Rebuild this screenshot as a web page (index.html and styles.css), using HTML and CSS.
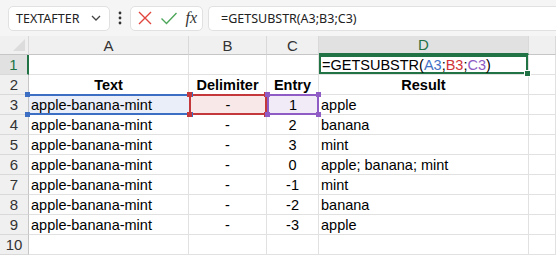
FILE: index.html
```html
<!DOCTYPE html>
<html lang="en">
<head>
    <meta charset="UTF-8">
    <title>GETSUBSTR</title>
    <link rel="stylesheet" href="styles.css">
</head>
<body>

    <div class="toolbar">
        <div class="namebox">
            <span>TEXTAFTER</span>
            <svg width="12" height="8" viewBox="0 0 12 8"><path d="M2 2 L6 6 L10 2" fill="none" stroke="#444" stroke-width="1.3"/></svg>
        </div>
        <div class="dots">
            <svg width="4" height="14" viewBox="0 0 4 14"><circle cx="2" cy="2" r="1.4" fill="#333"/><circle cx="2" cy="7" r="1.4" fill="#333"/><circle cx="2" cy="12" r="1.4" fill="#333"/></svg>
        </div>
        <div class="actions">
            <svg width="16" height="16" viewBox="0 0 16 16"><path d="M2 2 L14 14 M14 2 L2 14" stroke="#e0443c" stroke-width="1.4"/></svg>
            <svg width="18" height="16" viewBox="0 0 18 16"><path d="M1.5 8.5 L6.5 13.5 L16.5 3" fill="none" stroke="#4ca65a" stroke-width="1.4"/></svg>
            <span class="fx">fx</span>
        </div>
        <div class="formula">=GETSUBSTR(A3;B3;C3)</div>
    </div>

    <div class="sheet">
        <div class="corner"></div>
        <div class="colhead">A</div>
        <div class="colhead">B</div>
        <div class="colhead">C</div>
        <div class="colhead active">D</div>
        <div class="colhead"></div>

        <div class="rowhead active">1</div>
        <div class="cell"></div>
        <div class="cell"></div>
        <div class="cell"></div>
        <div class="cell current">=GETSUBSTR(<span class="ref-a">A3</span>;<span class="ref-b">B3</span>;<span class="ref-c">C3</span>)<i class="handle"></i></div>
        <div class="cell"></div>

        <div class="rowhead">2</div>
        <div class="cell bold center">Text</div>
        <div class="cell bold center">Delimiter</div>
        <div class="cell bold center">Entry</div>
        <div class="cell bold center">Result</div>
        <div class="cell"></div>

        <div class="rowhead">3</div>
        <div class="cell sel sel-a">apple-banana-mint<i class="dot tl"></i><i class="dot tr"></i><i class="dot bl"></i><i class="dot br"></i></div>
        <div class="cell center sel sel-b">-<i class="dot tl"></i><i class="dot tr"></i><i class="dot bl"></i><i class="dot br"></i></div>
        <div class="cell center sel sel-c">1<i class="dot tl"></i><i class="dot tr"></i><i class="dot bl"></i><i class="dot br"></i></div>
        <div class="cell">apple</div>
        <div class="cell"></div>

        <div class="rowhead">4</div>
        <div class="cell">apple-banana-mint</div>
        <div class="cell center">-</div>
        <div class="cell center">2</div>
        <div class="cell">banana</div>
        <div class="cell"></div>

        <div class="rowhead">5</div>
        <div class="cell">apple-banana-mint</div>
        <div class="cell center">-</div>
        <div class="cell center">3</div>
        <div class="cell">mint</div>
        <div class="cell"></div>

        <div class="rowhead">6</div>
        <div class="cell">apple-banana-mint</div>
        <div class="cell center">-</div>
        <div class="cell center">0</div>
        <div class="cell">apple; banana; mint</div>
        <div class="cell"></div>

        <div class="rowhead">7</div>
        <div class="cell">apple-banana-mint</div>
        <div class="cell center">-</div>
        <div class="cell center">-1</div>
        <div class="cell">mint</div>
        <div class="cell"></div>

        <div class="rowhead">8</div>
        <div class="cell">apple-banana-mint</div>
        <div class="cell center">-</div>
        <div class="cell center">-2</div>
        <div class="cell">banana</div>
        <div class="cell"></div>

        <div class="rowhead">9</div>
        <div class="cell">apple-banana-mint</div>
        <div class="cell center">-</div>
        <div class="cell center">-3</div>
        <div class="cell">apple</div>
        <div class="cell"></div>

        <div class="rowhead">10</div>
        <div class="cell"></div>
        <div class="cell"></div>
        <div class="cell"></div>
        <div class="cell"></div>
        <div class="cell"></div>
    </div>

</body>
</html>
```

FILE: styles.css
```css
body {
    margin: 0;
    width: 556px;
    height: 267px;
    overflow: hidden;
    background-color: #ffffff;
    font-family: "Liberation Sans", Arial, sans-serif;
}
.toolbar {
    height: 36px;
    background-color: #f5f5f5;
    display: flex;
    align-items: center;
    padding-left: 8px;
    box-sizing: border-box;
}
.namebox {
    width: 102px;
    height: 25px;
    box-sizing: border-box;
    background-color: white;
    border: 1px solid #e1e1e1;
    border-radius: 5px;
    display: flex;
    align-items: center;
    justify-content: space-between;
    padding: 0 7px 0 7px;
    font-family: "Noto Sans", sans-serif;
    font-size: 12.5px;
    color: #222;
}
.dots {
    width: 20px;
    display: flex;
    justify-content: center;
}
.actions {
    width: 73px;
    height: 25px;
    box-sizing: border-box;
    background-color: white;
    border: 1px solid #e1e1e1;
    border-radius: 5px;
    display: flex;
    align-items: center;
    justify-content: space-between;
    padding: 0 5px 0 6px;
}
.fx {
    font-family: "Liberation Serif", serif;
    font-style: italic;
    font-size: 16px;
    color: #333;
}
.formula {
    flex: 1;
    height: 25px;
    margin-left: 5px;
    box-sizing: border-box;
    background-color: white;
    border: 1px solid #e1e1e1;
    border-right: none;
    border-radius: 5px 0 0 5px;
    display: flex;
    align-items: center;
    padding-left: 12px;
    font-family: "Noto Sans", sans-serif;
    font-size: 12.5px;
    color: #222;
}
.sheet {
    display: grid;
    grid-template-columns: 29px 160px 78px 52px 210px 1fr;
    grid-template-rows: 19px repeat(10, 20px) 12px;
}
.corner {
    background-color: #f0f0f0;
    border-right: 1px solid #d9d9d9;
    border-bottom: 1px solid #c6c6c6;
    position: relative;
}
.corner::after {
    content: "";
    position: absolute;
    right: 3px;
    bottom: 3px;
    border-left: 12px solid transparent;
    border-bottom: 12px solid #dcdcdc;
}
.colhead {
    background-color: #f0f0f0;
    border-right: 1px solid #d9d9d9;
    border-bottom: 1px solid #c6c6c6;
    display: flex;
    align-items: center;
    justify-content: center;
    font-size: 15px;
    color: #333;
}
.colhead.active {
    background-color: #e1e1e1;
    color: #217346;
    border-bottom: 2px solid #217346;
}
.rowhead {
    background-color: #f0f0f0;
    border-right: 1px solid #c6c6c6;
    border-bottom: 1px solid #d9d9d9;
    display: flex;
    align-items: center;
    justify-content: center;
    font-size: 15px;
    color: #333;
}
.rowhead.active {
    background-color: #e1e1e1;
    color: #217346;
    border-right: 2px solid #217346;
}
.cell {
    position: relative;
    border-right: 1px solid #e1e1e1;
    border-bottom: 1px solid #e1e1e1;
    display: flex;
    align-items: center;
    padding-left: 2px;
    font-size: 14.5px;
    color: #000;
    white-space: nowrap;
}
.center {
    justify-content: center;
    padding-left: 0;
}
.bold {
    font-weight: bold;
}
.current {
    box-shadow: inset 0 0 0 2px #217346;
    padding-left: 3px;
    overflow: visible;
}
.handle {
    position: absolute;
    right: -3px;
    bottom: -3px;
    width: 5px;
    height: 5px;
    background-color: #217346;
    border: 1px solid white;
    z-index: 2;
}
.ref-a { color: #4472c4; }
.ref-b { color: #d13438; }
.ref-c { color: #8e5cc4; }
.sel {
    border-top: 2px solid;
    border-bottom: 2px solid;
    border-left: 2px solid;
    border-right: 2px solid;
    margin-top: -1px;
}
.sel-a {
    border-color: #3c6ec3;
    border-left: none;
    border-right: none;
    background-color: #e9eef8;
}
.sel-b {
    border-color: #c4373a;
    background-color: #f8e8e8;
}
.sel-c {
    border-color: #8e5cc4;
    background-color: #f0ebf7;
}
.dot {
    position: absolute;
    width: 5px;
    height: 5px;
    z-index: 2;
}
.sel-a .dot { background-color: #3c6ec3; }
.sel-b .dot { background-color: #c4373a; }
.sel-c .dot { background-color: #8e5cc4; }
.tl { left: -4px; top: -4px; }
.tr { right: -4px; top: -4px; }
.bl { left: -4px; bottom: -4px; }
.br { right: -4px; bottom: -4px; }
```
